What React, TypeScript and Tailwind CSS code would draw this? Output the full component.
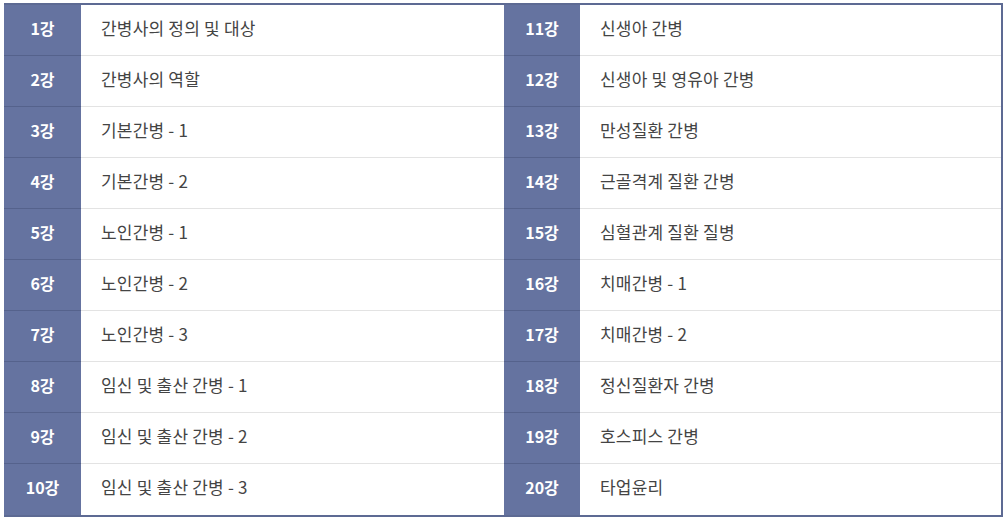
import React from 'react';

const lessons: [string, string][] = [
  ['1강', '간병사의 정의 및 대상'],
  ['2강', '간병사의 역할'],
  ['3강', '기본간병 - 1'],
  ['4강', '기본간병 - 2'],
  ['5강', '노인간병 - 1'],
  ['6강', '노인간병 - 2'],
  ['7강', '노인간병 - 3'],
  ['8강', '임신 및 출산 간병 - 1'],
  ['9강', '임신 및 출산 간병 - 2'],
  ['10강', '임신 및 출산 간병 - 3'],
  ['11강', '신생아 간병'],
  ['12강', '신생아 및 영유아 간병'],
  ['13강', '만성질환 간병'],
  ['14강', '근골격계 질환 간병'],
  ['15강', '심혈관계 질환 질병'],
  ['16강', '치매간병 - 1'],
  ['17강', '치매간병 - 2'],
  ['18강', '정신질환자 간병'],
  ['19강', '호스피스 간병'],
  ['20강', '타업윤리'],
];

const Cell = ({ no, title, last }: { no: string; title: string; last: boolean }) => (
  <>
    <div
      className={`flex items-center justify-center pb-[5px] bg-[#6573a0] text-white font-bold text-[16px] ${
        last ? '' : 'border-b border-[#55628c]'
      }`}
    >
      {no}
    </div>
    <div
      className={`flex items-center pl-5 pb-[5px] bg-white text-[#444] text-[17px] tracking-[0.2px] ${
        last ? '' : 'border-b border-[#e3e3e3]'
      }`}
    >
      {title}
    </div>
  </>
);

export default function App() {
  const left = lessons.slice(0, 10);
  const right = lessons.slice(10);

  return (
    <div
      className="w-[1006px] h-[520px] bg-white pt-[3px] pl-[4px]"
      style={{ fontFamily: '"Noto Sans CJK KR", "Noto Sans", sans-serif' }}
    >
      <div className="w-[999px] border-t-2 border-r-2 border-b-2 border-[#5d6a93] grid grid-cols-[77px_423px_76px_1fr] auto-rows-[51px]">
        {left.map((l, i) => (
          <React.Fragment key={l[0]}>
            <Cell no={l[0]} title={l[1]} last={i === 9} />
            <Cell no={right[i][0]} title={right[i][1]} last={i === 9} />
          </React.Fragment>
        ))}
      </div>
    </div>
  );
}
